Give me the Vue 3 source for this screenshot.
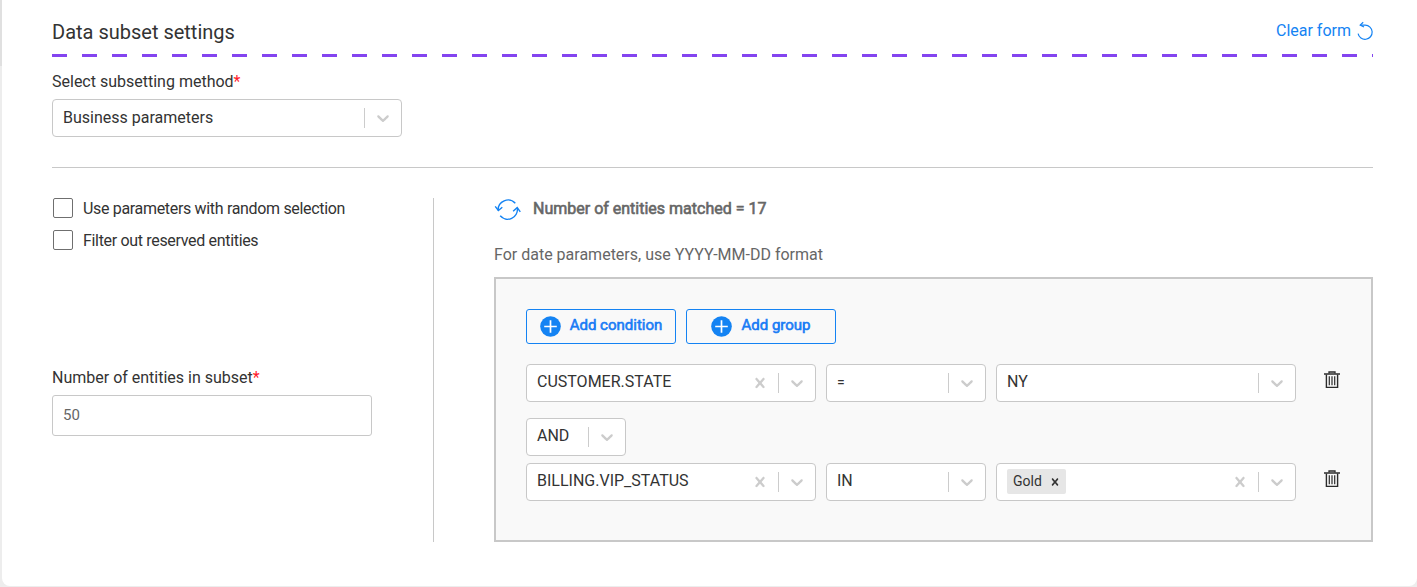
<script setup>
import { h } from 'vue'

const chevronPath =
  'M4.516 7.548c0.436-0.446 1.043-0.481 1.576 0l3.908 3.747 3.908-3.747c0.533-0.481 1.141-0.446 1.574 0 0.436 0.445 0.408 1.197 0 1.615-0.406 0.418-4.695 4.502-4.695 4.502-0.217 0.223-0.502 0.335-0.787 0.335s-0.57-0.112-0.789-0.335c0 0-4.287-4.084-4.695-4.502s-0.436-1.17 0-1.615z'
const crossPath =
  'M14.348 14.849c-0.469 0.469-1.229 0.469-1.697 0l-2.651-3.030-2.651 3.029c-0.469 0.469-1.229 0.469-1.697 0-0.469-0.469-0.469-1.229 0-1.697l2.758-3.15-2.759-3.152c-0.469-0.469-0.469-1.228 0-1.697s1.228-0.469 1.697 0l2.652 3.031 2.651-3.031c0.469-0.469 1.228-0.469 1.697 0s0.469 1.229 0 1.697l-2.758 3.152 2.758 3.15c0.469 0.469 0.469 1.229 0 1.698z'

const Glyph = (props) =>
  h('svg', { width: props.size, height: props.size, viewBox: '0 0 20 20', fill: 'currentColor' }, [
    h('path', { d: props.d }),
  ])
Glyph.props = ['d', 'size']

const options = ['Use parameters with random selection', 'Filter out reserved entities']
const actions = ['Add condition', 'Add group']
const rows = [
  {
    id: 1,
    fields: [
      { size: 'wide', value: 'CUSTOMER.STATE', clear: true },
      { size: 'mid', value: '=' },
      { size: 'full', value: 'NY' },
    ],
  },
  { id: 2, join: true, fields: [{ size: 'small', value: 'AND' }] },
  {
    id: 3,
    fields: [
      { size: 'wide', value: 'BILLING.VIP_STATUS', clear: true },
      { size: 'mid', value: 'IN' },
      { size: 'full', tag: 'Gold', clear: true },
    ],
  },
]
</script>

<template>
  <div class="page">
    <div class="rail"></div>
    <main class="card">
      <header class="head">
        <h1>Data subset settings</h1>
        <a class="clear">
          <span>Clear form</span>
          <svg width="18" height="20" viewBox="0 0 18 20" fill="none" stroke="currentColor" stroke-width="1.2">
            <path d="M4.8 4.1H9.2A7.1 7.1 0 1 1 2.1 12.6" />
            <path d="M7.2 1.2L4.2 4.1L8 6" />
          </svg>
        </a>
      </header>
      <div class="dashes"></div>

      <section class="method">
        <label class="label">Select subsetting method<em>*</em></label>
        <div class="select method-select">
          <span class="value">Business parameters</span>
          <i class="sep"></i>
          <span class="ind"><Glyph :d="chevronPath" size="20" /></span>
        </div>
      </section>

      <section class="body">
        <div class="left">
          <div class="checks">
            <label v-for="o in options" :key="o" class="check"><i class="box"></i><span>{{ o }}</span></label>
          </div>
          <label class="label">Number of entities in subset<em>*</em></label>
          <div class="input">50</div>
        </div>

        <div class="right">
          <div class="matched">
            <svg width="28" height="24" viewBox="0 0 28 24" fill="none" stroke="currentColor" stroke-width="1.4">
              <path d="M21.3 5.3A9.8 9.8 0 0 0 4.2 12.5" />
              <path d="M1.2 8.3L4.4 12.5L8.3 9.2" />
              <path d="M6.2 17.8A9.8 9.8 0 0 0 23.3 10" />
              <path d="M19.1 13.2L23.2 9.6L26.3 13.8" />
            </svg>
            <span class="faux">Number of entities matched = 17</span>
          </div>
          <p class="hint">For date parameters, use YYYY-MM-DD format</p>
          <div class="panel">
            <div class="actions">
              <button v-for="a in actions" :key="a" class="btn">
                <svg width="21" height="21" viewBox="0 0 21 21">
                  <circle cx="10.5" cy="10.5" r="10.3" fill="#1483f3" />
                  <path d="M10.5 4.2V16.8M4.2 10.5H16.8" stroke="#fff" stroke-width="1.7" />
                </svg>
                <span>{{ a }}</span>
              </button>
            </div>
            <div v-for="r in rows" :key="r.id" class="row" :class="{ join: r.join }">
              <div v-for="f in r.fields" :key="f.size" class="select" :class="f.size">
                <span v-if="f.tag" class="value tagged">
                  <span class="tag"><span>{{ f.tag }}</span><Glyph :d="crossPath" size="14" /></span>
                </span>
                <span v-else class="value" :class="{ sign: f.value === '=' }">{{ f.value }}</span>
                <span v-if="f.clear" class="ind"><Glyph :d="crossPath" size="20" /></span>
                <i class="sep"></i>
                <span class="ind"><Glyph :d="chevronPath" size="20" /></span>
              </div>
              <svg v-if="!r.join" class="trash" width="16" height="18" viewBox="0 0 16 18" fill="none" stroke="#2b2b2b">
                <path d="M0 3H16" stroke-width="1.5" />
                <path d="M5 2.6V1H11V2.6" stroke-width="1.3" />
                <path d="M2.4 3.5V16.4H13.6V3.5" stroke-width="1.4" />
                <path d="M5.3 5.2V14.2M8 5.2V14.2M10.7 5.2V14.2" stroke-width="1.2" />
              </svg>
            </div>
          </div>
        </div>
      </section>
    </main>
  </div>
</template>

<style>
body {
  background: #ededed;
}
</style>

<style scoped>
.page {
  display: flex;
  height: 587px;
  overflow: hidden;
  font-family: Roboto, 'Liberation Sans', sans-serif;
  font-size: 16px;
  line-height: 20px;
  color: #333;
}
.page * {
  box-sizing: border-box;
}
.rail {
  width: 2px;
  height: 66px;
  background: #e0e0e0;
}
.card {
  flex: 1;
  height: 586px;
  padding: 0 44px 0 50px;
  background: #fff;
  border-radius: 0 0 8px 8px;
}
.head {
  display: flex;
  justify-content: space-between;
  height: 54px;
  padding-top: 20px;
}
h1 {
  margin: 0;
  font-size: 20px;
  font-weight: 400;
  line-height: 24px;
}
.clear {
  display: flex;
  gap: 5px;
  margin-right: -1px;
  padding-top: 1px;
  color: #1483f3;
}
.dashes {
  height: 3px;
  background: repeating-linear-gradient(90deg, #8444f0 0 15px, transparent 15px 30px);
}
.method {
  height: 111px;
  padding-top: 15px;
  border-bottom: 1px solid #c8c8c8;
}
.label {
  display: block;
  height: 27px;
}
em {
  font-style: normal;
  color: #ff1a2a;
}
.select {
  display: flex;
  height: 38px;
  background: #fff;
  border: 1px solid #c8c8c8;
  border-radius: 4px;
}
.value {
  flex: 1;
  padding: 7px 0 0 10px;
}
.method-select {
  width: 350px;
}
.method-select .value {
  padding-top: 8px;
}
.sep {
  width: 1px;
  margin: 8px 0;
  background: #ccc;
}
.ind {
  display: flex;
  padding: 8px;
  color: #ccc;
}
.body {
  display: flex;
  height: 374px;
  padding-top: 30px;
}
.left {
  width: 382px;
  height: 344px;
  border-right: 1px solid #c8c8c8;
}
.checks {
  display: flex;
  flex-direction: column;
  gap: 11px;
  height: 170px;
}
.check {
  display: flex;
  gap: 10px;
  padding-left: 1px;
}
.check span {
  padding-top: 1px;
  letter-spacing: -0.325px;
}
.box {
  width: 20px;
  height: 20px;
  border: 1px solid #6f6f6f;
  border-radius: 2px;
}
.input {
  width: 320px;
  height: 41px;
  padding: 9px 10px;
  border: 1px solid #c8c8c8;
  border-radius: 3px;
  color: #666;
  font-size: 15px;
}
.right {
  flex: 1;
  padding-left: 60px;
}
.matched {
  display: flex;
  align-items: flex-start;
  height: 47px;
  color: #1483f3;
}
.matched .faux {
  margin-left: 11px;
  padding-top: 1px;
  color: #666;
  -webkit-text-stroke: 0.6px #666;
}
.hint {
  height: 32px;
  margin: 0;
  color: #666;
}
.panel {
  height: 265px;
  padding: 30px;
  background: #f9f9f9;
  border: 2px solid #c8c8c8;
}
.actions {
  display: flex;
  gap: 10px;
  margin-bottom: 20px;
}
.btn {
  display: flex;
  justify-content: center;
  gap: 9px;
  width: 150px;
  height: 35px;
  padding: 6px 0 0;
  background: transparent;
  border: 1px solid #1483f3;
  border-radius: 3px;
  color: #1a7cf5;
  font: inherit;
  font-size: 15px;
}
.btn span {
  margin-top: -1px;
  -webkit-text-stroke: 0.6px #1a7cf5;
}
.row {
  display: flex;
  gap: 10px;
}
.join {
  margin: 16px 0 7px;
}
.wide {
  width: 290px;
}
.mid {
  width: 160px;
}
.full {
  width: 300px;
}
.small {
  width: 100px;
}
.sign {
  font-size: 14px;
}
.tagged {
  padding-top: 5px;
}
.tag {
  display: inline-flex;
  align-items: center;
  gap: 6px;
  height: 25px;
  padding: 0 4px 0 6px;
  background: #e6e6e6;
  border-radius: 2px;
  font-size: 14px;
}
.tag span {
  margin-top: -2px;
}
.trash {
  margin: 7px 0 0 18px;
}
</style>
